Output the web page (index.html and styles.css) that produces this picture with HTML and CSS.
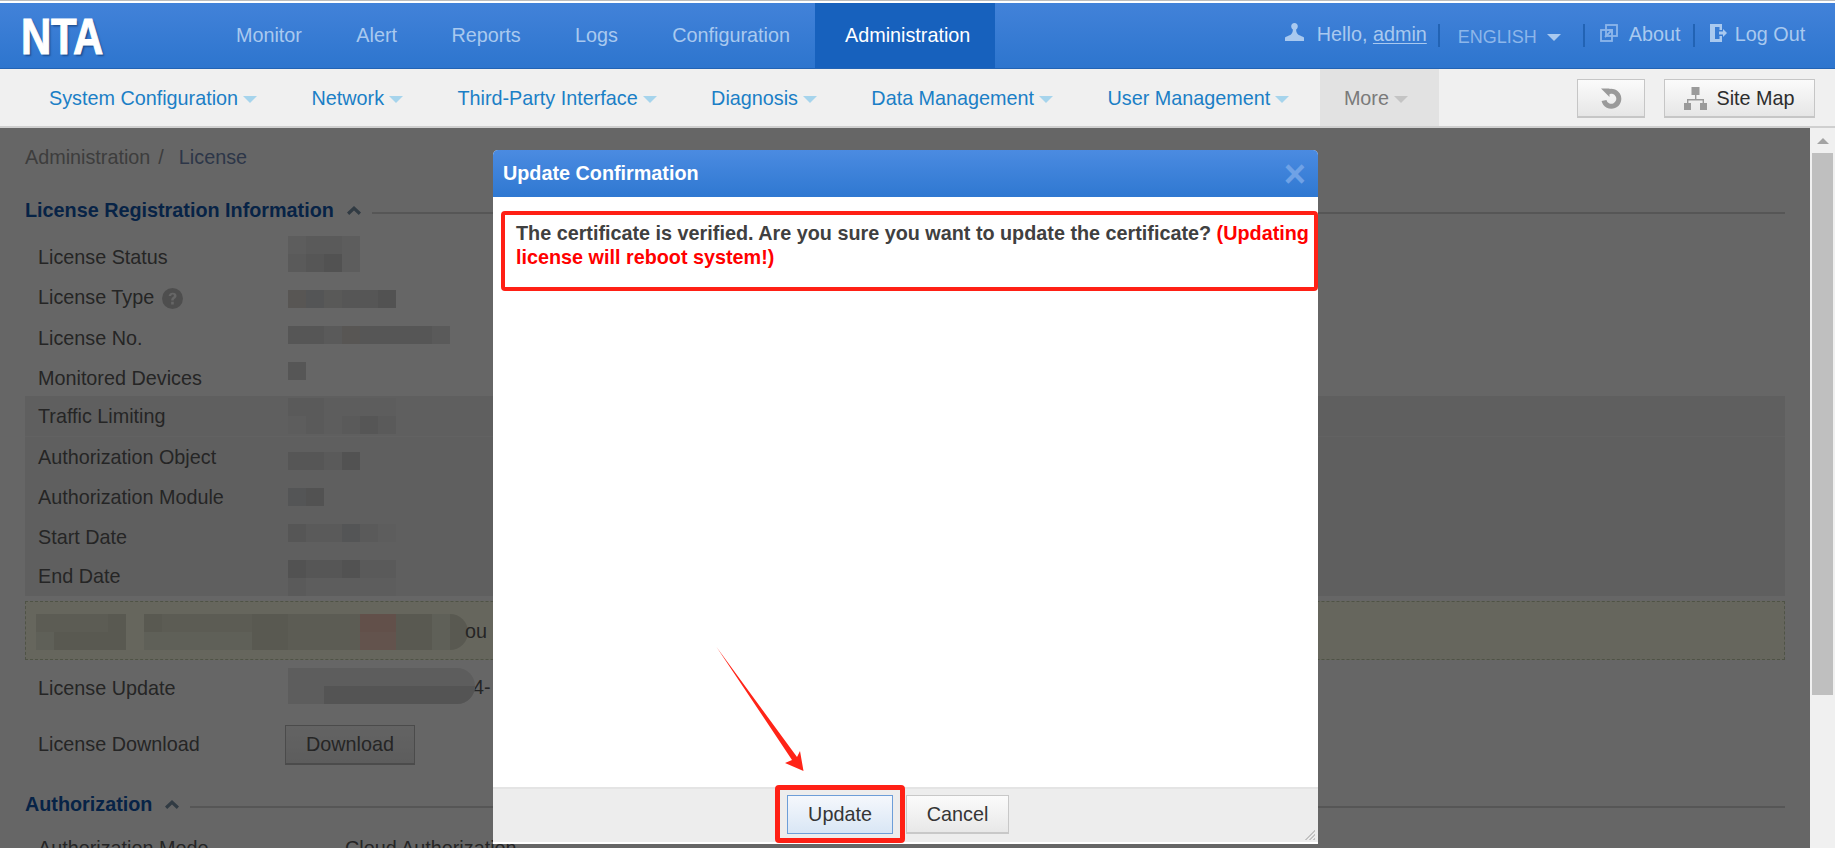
FILE: index.html
```html
<!DOCTYPE html>
<html lang="en">
<head>
<meta charset="utf-8">
<title>NTA - License</title>
<link rel="stylesheet" href="styles.css">
</head>
<body>
<div class="app">
  <header class="topbar">
    <div class="logo"><span class="logo-text">NTA</span></div>
    <nav class="mainnav">
      <a class="mainnav-item">Monitor</a>
      <a class="mainnav-item">Alert</a>
      <a class="mainnav-item">Reports</a>
      <a class="mainnav-item">Logs</a>
      <a class="mainnav-item">Configuration</a>
      <a class="mainnav-item active">Administration</a>
    </nav>
    <div class="userbar">
      <svg class="ico-user" viewBox="0 0 19 18"><path d="M9.5 0c2 0 3.3 1.4 3.3 3.3 0 1.5-.8 2.600-1.700 3.200 0 2.500 1 4.300 2.600 5.500 1.800.6 4.100 1.600 5.300 2.600V18H0v-3.400c1.200-1 3.500-2 5.300-2.600 1.600-1.200 2.600-3 2.600-5.500C7 5.900 6.200 4.800 6.200 3.300 6.200 1.400 7.500 0 9.500 0z"/></svg>
      <span class="hello">Hello, <u>admin</u></span>
      <span class="sep sep-a"></span>
      <span class="lang">ENGLISH</span><span class="caret-lang"></span>
      <span class="sep sep-b"></span>
      <svg class="ico-about" viewBox="0 0 18 18" fill="none" stroke="currentColor" stroke-width="1.800"><rect x="6" y="1" width="11" height="11"/><rect x="1" y="6" width="11" height="11"/><path d="M5 13l7-7M8.500 6H12v3.500"/></svg>
      <span class="about">About</span>
      <span class="sep sep-c"></span>
      <svg class="ico-logout" viewBox="0 0 17 18"><path d="M0 0h12v6H9.500V3H5v12h4.500v-3H12v6H0z"/><path d="M9 7.500h4V5l4 4-4 4v-2.500H9z"/></svg>
      <span class="logout">Log Out</span>
    </div>
  </header>

  <div class="subnav">
    <a class="subnav-item">System Configuration<i class="caret"></i></a>
    <a class="subnav-item">Network<i class="caret"></i></a>
    <a class="subnav-item">Third-Party Interface<i class="caret"></i></a>
    <a class="subnav-item">Diagnosis<i class="caret"></i></a>
    <a class="subnav-item">Data Management<i class="caret"></i></a>
    <a class="subnav-item">User Management<i class="caret"></i></a>
    <a class="subnav-item more">More<i class="caret"></i></a>
    <div class="subnav-actions">
      <button class="tool-btn refresh" type="button" aria-label="Refresh">
        <svg viewBox="0 0 22 22" fill="none" stroke="#9a9a9a" stroke-width="5"><path d="M6.500 6A7.500 7.500 0 1 1 4 13.500"/><path d="M1 1.500h8.500v8.500z" fill="#9a9a9a" stroke="none"/></svg>
      </button>
      <button class="tool-btn sitemap" type="button">
        <svg viewBox="0 0 23 23" fill="#9a9a9a"><rect x="7.500" y="0" width="8" height="8"/><rect x="0" y="16" width="7" height="7"/><rect x="16" y="16" width="7" height="7"/><path d="M11 8h1.400v4H20v4h-1.400v-2.600H4.400V16H3v-4h8z"/></svg>
        Site Map
      </button>
    </div>
  </div>

  <div class="workspace">
    <main class="content">
      <div class="crumbs"><span class="crumb">Administration</span><span class="crumb-sep">/</span><span class="crumb-cur">License</span></div>

      <div class="section-head"><h2>License Registration Information</h2><svg class="chev" viewBox="0 0 14 9"><path d="M7 0l7 6.500L11.800 9 7 4.500 2.200 9 0 6.500z"/></svg><span class="rule"></span></div>

      <div class="row row-lo"><span class="label">License Status</span><div class="mosaic w4 t0"><i class="b"></i><i class="c"></i><i class="c"></i><i class="b"></i><i class="c"></i><i class="d"></i><i class="e"></i><i class="b"></i></div></div>
      <div class="row row-lo"><span class="label">License Type <svg class="help" viewBox="0 0 22 22"><circle cx="11" cy="11" r="11" fill="#c4c4c4"/><path d="M7 8.500c.3-2.300 2-3.500 4.200-3.500 2.400 0 4 1.300 4 3.200 0 1.600-1 2.400-2 3-.7.500-1 .9-1 1.800H9.700c0-1.700.5-2.600 1.500-3.300.8-.5 1.300-1 1.300-1.600 0-.8-.5-1.200-1.300-1.200-.9 0-1.500.6-1.600 1.500zM9.600 14.500h2.700v2.700H9.600z" fill="#fff"/></svg></span><div class="mosaic w6 t14"><i class="w"></i><i class="g"></i><i class="f"></i><i class="d"></i><i class="d"></i><i class="e"></i></div></div>
      <div class="row row-lower"><span class="label">License No.</span><div class="mosaic w9 t10"><i class="d"></i><i class="d"></i><i class="c"></i><i class="w"></i><i class="d"></i><i class="d"></i><i class="d"></i><i class="d"></i><i class="c"></i></div></div>
      <div class="row row-lower"><span class="label">Monitored Devices</span><div class="mosaic w1 t6"><i class="d"></i></div></div>
      <div class="band">
        <div class="row"><span class="label">Traffic Limiting</span><div class="mosaic w6 t2"><i class="c"></i><i class="c"></i><i class="b"></i><i class="b"></i><i class="b"></i><i class="b"></i><i class="b"></i><i class="c"></i><i class="b"></i><i class="c"></i><i class="d"></i><i class="c"></i></div></div>
        <div class="row row-top row-lo"><span class="label">Authorization Object</span><div class="mosaic w4 t16"><i class="d"></i><i class="d"></i><i class="c"></i><i class="e"></i></div></div>
        <div class="row row-lo"><span class="label">Authorization Module</span><div class="mosaic w2 t12"><i class="g"></i><i class="e"></i></div></div>
        <div class="row row-lo"><span class="label">Start Date</span><div class="mosaic w6 t8"><i class="d"></i><i class="c"></i><i class="c"></i><i class="g"></i><i class="c"></i><i class="b"></i></div></div>
        <div class="row"><span class="label">End Date</span><div class="mosaic w6 t4"><i class="e"></i><i class="d"></i><i class="d"></i><i class="e"></i><i class="c"></i><i class="c"></i><i class="c"></i><i class="b"></i><i class="b"></i><i class="b"></i><i class="b"></i><i class="b"></i></div></div>
      </div>

      <div class="notice">
        <div class="note-cells note-a">
          <i class="n1"></i><i class="n1"></i><i class="n1"></i><i class="n1"></i><i class="n2"></i>
          <i class="n3"></i><i class="n2"></i><i class="n2"></i><i class="n2"></i><i class="n2"></i>
        </div>
        <div class="note-cells note-b">
          <i class="n2"></i><i class="n1"></i><i class="n1"></i><i class="n1"></i><i class="n1"></i><i class="n1"></i><i class="n2"></i><i class="n2"></i><i class="n1"></i><i class="n1"></i><i class="n1"></i><i class="n1"></i><i class="nr"></i><i class="nr"></i><i class="n2"></i><i class="n2"></i><i class="n3"></i><i class="n2"></i>
          <i class="n3"></i><i class="n3"></i><i class="n3"></i><i class="n3"></i><i class="n3"></i><i class="n3"></i><i class="n2"></i><i class="n2"></i><i class="n1"></i><i class="n1"></i><i class="n1"></i><i class="n1"></i><i class="nr2"></i><i class="nr2"></i><i class="n2"></i><i class="n2"></i><i class="n3"></i><i class="n2"></i>
        </div>
        <span class="note-tail">ou</span>
      </div>

      <div class="row row-update"><span class="label">License Update</span><div class="mosaic-upload"><div class="upload-bar"></div></div><span class="upload-tail">4-</span></div>
      <div class="row row-download"><span class="label">License Download</span><button class="dl-btn" type="button">Download</button></div>

      <div class="section-head second"><h2>Authorization</h2><svg class="chev" viewBox="0 0 14 9"><path d="M7 0l7 6.500L11.800 9 7 4.500 2.200 9 0 6.500z"/></svg><span class="rule"></span></div>
      <div class="row row-last"><span class="label">Authorization Mode</span><span class="val-last">Cloud Authorization</span></div>

      <div class="overlay"></div>
    </main>
    <aside class="scrollbar">
      <span class="scroll-up"></span>
      <span class="scroll-thumb"></span>
    </aside>
  </div>

  <section class="modal">
    <div class="modal-head"><span class="modal-title">Update Confirmation</span><span class="modal-x">×</span></div>
    <div class="modal-body">
      <p>The certificate is verified. Are you sure you want to update the certificate? <span class="warn">(Updating license will reboot system!)</span></p>
    </div>
    <div class="modal-foot">
      <button class="foot-btn primary" type="button">Update</button>
      <button class="foot-btn" type="button">Cancel</button>
      <svg class="grip" viewBox="0 0 12 12" fill="#999"><path d="M11 1v1L2 11H1zM11 5v1l-5 5H5zM11 9v1l-1 1H9z"/></svg>
    </div>
  </section>

  <span class="mark mark-text"></span>
  <span class="mark mark-btn"></span>
  <svg class="arrow" viewBox="0 0 1835 848"><polygon points="716.500,647 797,757 800,751 803.500,771 785,763 792,760" fill="#ff2418"/></svg>
</div>
</body>
</html>
```

FILE: styles.css
```css
* { box-sizing: border-box; }
html, body { margin: 0; height: 100%; overflow: hidden; background: #fff; }
body { font-family: "Liberation Sans", Arial, sans-serif; font-size: 19.8px; color: #555; }

.app { position: relative; width: 1835px; height: 848px; display: flex; flex-direction: column; padding-top: 3px; background: linear-gradient(#bdbdbd 0, #bdbdbd 1px, #fff 1px, #fff 3px) no-repeat top / 100% 3px; overflow: hidden; }

/* top bar */
.topbar { height: 66px; flex: none; display: flex; background: linear-gradient(#4282d9, #2d75ce); border-bottom: 1px solid #2263b4; color: #a9c9ef; }
.logo { width: 208.800px; padding-left: 21px; display: flex; align-items: center; }
.logo-text { font-weight: 700; font-size: 50px; line-height: 1; color: #fff; display: inline-block; transform: scaleX(.84); transform-origin: left center; -webkit-text-stroke: 1px #fff; text-shadow: 2px 2px 2px rgba(10, 40, 90, .55); letter-spacing: -.5px; margin-top: 2px; }
.mainnav { display: flex; }
.mainnav-item { padding: 0 27.200px; display: flex; align-items: center; }
.mainnav-item.active { background: #1761bd; color: #fff; padding: 0 25px 0 30px; margin-left: -2.200px; }

.userbar { flex: 1; position: relative; }
.userbar > * { position: absolute; }
.ico-user { left: 290px; top: 20px; width: 19px; height: 18px; fill: #a9c9ef; }
.hello { left: 321.500px; top: 20px; }
.hello u { text-underline-offset: 2px; }
.sep { width: 2px; height: 23px; top: 21px; background: #2263b4; }
.sep-a { left: 442.500px; }
.sep-b { left: 587.500px; }
.sep-c { left: 697.500px; }
.lang { left: 462.500px; top: 24px; font-size: 18px; color: #8db6ea; }
.caret-lang { left: 552px; top: 31px; width: 0; height: 0; border: 7px solid transparent; border-top-color: #a9c9ef; border-bottom: 0; }
.ico-about { left: 604.500px; top: 21px; width: 18px; height: 18px; color: #8db6ea; }
.about { left: 633.500px; top: 20px; }
.ico-logout { left: 714.500px; top: 21px; width: 17px; height: 18px; fill: #a9c9ef; }
.logout { left: 739.500px; top: 20px; }

/* sub navigation */
.subnav { height: 59px; flex: none; display: flex; align-items: stretch; background: #f0f0f0; border-bottom: 2px solid #cfcfcf; padding-left: 21.800px; }
.subnav-item { display: flex; align-items: center; padding: 2px 27.200px 0; color: #1b7fc6; white-space: nowrap; }
.caret { width: 0; height: 0; margin-left: 5px; margin-top: 2px; border: 7px solid transparent; border-top: 7px solid #a6d4ec; border-bottom: 0; }
.subnav-item.more { background: #e2e2e2; color: #7a7a7a; margin-left: 3.500px; padding: 2px 31px 0 24px; }
.subnav-item.more .caret { border-top-color: #c4c4c4; }
.subnav-actions { margin-left: auto; display: flex; align-items: flex-start; gap: 19px; padding: 10px 20px 0 0; }
.tool-btn { height: 39px; border: 1px solid #c6c6c6; border-bottom-width: 2px; background: linear-gradient(#fbfbfb, #e6e6e6); font: inherit; color: #2d2d2d; display: flex; align-items: center; justify-content: center; padding: 0; }
.refresh { width: 68px; }
.refresh svg { width: 22px; height: 22px; }
.sitemap { width: 151px; gap: 9px; }
.sitemap svg { width: 23px; height: 23px; }

/* page beneath the mask */
.workspace { flex: 1; display: flex; min-height: 0; }
.content { position: relative; flex: 1; padding: 0 25px; overflow: hidden; background: #fff; }
.overlay { position: absolute; inset: 0; background: rgba(0, 0, 0, .6); }
.crumbs { height: 58px; display: flex; align-items: center; }
.crumb { color: #999; }
.crumb-sep { color: #999; margin-left: 8px; }
.crumb-cur { color: #7088b4; margin-left: 15px; }
.section-head { height: 50px; display: flex; align-items: center; padding-bottom: 2px; }
.section-head h2 { margin: 0; font: 700 19.800px "Liberation Sans", Arial, sans-serif; color: #1258b0; white-space: nowrap; }
.chev { width: 14px; height: 9px; margin-left: 13px; fill: #7b93a8; flex: none; }
.rule { flex: 1; height: 2px; margin: 5px 0 0 11px; background: #d6d6d6; }

.row { height: 40px; padding-left: 13px; display: flex; align-items: flex-start; position: relative; }
.label { width: 250px; flex: none; line-height: 41px; color: #5e5e5e; }
.row-lo .label { padding-top: 1px; }
.row-lower .label { padding-top: 2px; }
.help { width: 21px; height: 21px; vertical-align: -5px; margin-left: 2px; }
.band { background: #eee; }
.row-top { box-shadow: inset 0 1px 0 #f4f4f4; }

.mosaic { display: grid; grid-auto-rows: 18px; }
.mosaic i { display: block; }
.w1 { grid-template-columns: repeat(1, 18px); }
.w2 { grid-template-columns: repeat(2, 18px); }
.w4 { grid-template-columns: repeat(4, 18px); }
.w6 { grid-template-columns: repeat(6, 18px); }
.w9 { grid-template-columns: repeat(9, 18px); }
.t0 { margin-top: 0; }
.t2 { margin-top: 2px; }
.t4 { margin-top: 4px; }
.t6 { margin-top: 6px; }
.t8 { margin-top: 8px; }
.t10 { margin-top: 10px; }
.t12 { margin-top: 12px; }
.t14 { margin-top: 14px; }
.t16 { margin-top: 16px; }
.mosaic .b { background: #e8e8e8; }
.mosaic .c { background: #e0e0e0; }
.mosaic .d { background: #d6d6d6; }
.mosaic .e { background: #cdcdcd; }
.mosaic .f { background: #dfdedb; }
.mosaic .g { background: #d2d4d8; }
.mosaic .w { background: #dbd7d2; }

.notice { height: 59px; margin-top: 5px; background: #fffee8; border: 1px dashed #c6d0ae; padding: 12px 0 0 10px; display: flex; position: relative; }
.note-cells { display: grid; grid-auto-rows: 18px; height: 36px; }
.note-cells i { display: block; }
.note-a { grid-template-columns: repeat(5, 18px); }
.note-b { grid-template-columns: repeat(18, 18px); margin-left: 18px; border-radius: 0 18px 18px 0; overflow: hidden; }
.n1 { background: #e6e7d2; }
.n2 { background: #dedfca; }
.n3 { background: #eeefdb; }
.nr { background: #f4c8b8; }
.nr2 { background: #f8d0c0; }
.note-tail { color: #5e5e5e; line-height: 34px; margin-left: -3px; }

.row-update { height: 50px; padding-top: 8px; }
.row-update .label { line-height: 40px; margin-top: 0; }
.mosaic-upload { width: 187px; height: 36px; border-radius: 0 18px 18px 0; background: #e8e8e8; position: relative; }
.upload-bar { position: absolute; left: 36px; right: 0; bottom: 0; height: 18px; background: #d2d2d2; border-radius: 0 0 18px 0; }
.upload-tail { color: #5e5e5e; line-height: 38px; margin-left: -2px; }
.row-download { height: 71px; padding-top: 15px; }
.row-download .label { line-height: 40px; margin-top: -1px; }
.dl-btn { width: 130px; height: 40px; margin-left: -3px; border: 1px solid #bcbcbc; border-bottom-width: 2px; background: linear-gradient(#f8f8f8, #e8e8e8); font: inherit; color: #5e5e5e; padding: 0; }
.section-head.second { height: 48px; }
.section-head.second .chev { margin-left: 13px; }
.row-last { height: 40px; }
.row-last .label { width: 307px; line-height: 38px; }
.val-last { line-height: 38px; color: #5e5e5e; }

/* scrollbar */
.scrollbar { width: 25px; flex: none; background: #f0f0f0; position: relative; }
.scroll-up { position: absolute; left: 7px; top: 10px; width: 0; height: 0; border: 6px solid transparent; border-bottom: 6px solid #a3a3a3; border-top: 0; }
.scroll-thumb { position: absolute; left: 2px; right: 2px; top: 25px; height: 542px; background: #bfbfbf; }

/* modal */
.modal { position: absolute; left: 493px; top: 150px; width: 825px; height: 694px; display: flex; flex-direction: column; background: #fff; border-radius: 5px 5px 0 0; overflow: hidden; }
.modal-head { height: 47px; flex: none; display: flex; align-items: center; justify-content: space-between; padding: 0 12px 0 10px; background: linear-gradient(#4b8be1, #2f78d1); }
.modal-title { font-weight: 700; color: #fff; }
.modal-x { font-size: 38px; font-weight: 700; color: #6fa2e6; line-height: 1; }
.modal-body { flex: 1; padding: 0 8px 0 23px; }
.modal-body p { margin: 0; padding-top: 24px; line-height: 24px; font-weight: 700; color: #404040; }
.warn { color: #f00; }
.modal-foot { height: 57px; flex: none; position: relative; display: flex; align-items: flex-start; justify-content: center; gap: 13px; padding: 6px 15px 0 0; background: #ededed; border-top: 2px solid #e4e4e4; border-bottom: 2px solid #fff; }
.foot-btn { width: 103px; height: 39px; border: 1px solid #c8c8c8; border-bottom-width: 2px; background: linear-gradient(#fbfbfb, #e8e8e8); font: inherit; color: #353535; padding: 0; }
.foot-btn.primary { width: 106px; border: 1px solid #6d9ed8; background: linear-gradient(#f5f8fc, #d9e6f5); }
.grip { position: absolute; right: 2px; bottom: 1px; width: 12px; height: 12px; }

/* annotations */
.mark { position: absolute; border: 4px solid #ff2015; border-radius: 4px; pointer-events: none; }
.mark-text { left: 501px; top: 211px; width: 817px; height: 80px; }
.mark-btn { left: 775px; top: 785px; width: 130px; height: 58px; border-width: 5px; }
.arrow { position: absolute; left: 0; top: 0; width: 1835px; height: 848px; pointer-events: none; }
```
